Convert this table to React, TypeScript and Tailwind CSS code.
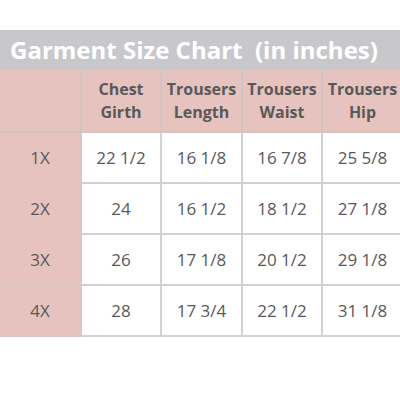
import React from "react";

const rows = [
  ["1X", "22 1/2", "16 1/8", "16 7/8", "25 5/8"],
  ["2X", "24", "16 1/2", "18 1/2", "27 1/8"],
  ["3X", "26", "17 1/8", "20 1/2", "29 1/8"],
  ["4X", "28", "17 3/4", "22 1/2", "31 1/8"],
];

const headers = [
  ["Chest", "Girth"],
  ["Trousers", "Length"],
  ["Trousers", "Waist"],
  ["Trousers", "Hip"],
];

export default function App() {
  return (
    <div
      className="w-[400px] h-[400px] overflow-hidden bg-white pt-[30px]"
      style={{ fontFamily: '"Open Sans", "Noto Sans", sans-serif' }}
    >
      <div className="h-[40px] bg-[#c8c8cc] flex items-center pl-[10px] text-white font-bold text-[24px] whitespace-pre leading-none">
        {"Garment Size Chart  (in inches)"}
      </div>
      <div className="grid grid-cols-[82px_80px_81px_80px_81px] w-[404px]">
        <div className="h-[63px] bg-[#e6c3bf] border-r-2 border-b-2 border-[#d3c4c2]" />
        {headers.map((h, i) => (
          <div
            key={i}
            className="h-[63px] bg-[#e6c3bf] border-r-2 border-b-2 border-[#d3c4c2] flex flex-col items-center justify-center text-[#595959] font-bold text-[16px] leading-[23px]"
          >
            <span>{h[0]}</span>
            <span>{h[1]}</span>
          </div>
        ))}
        {rows.map((r, ri) =>
          r.map((c, ci) => (
            <div
              key={ri + "-" + ci}
              className={
                "h-[51px] border-r-2 border-b-2 flex items-center justify-center text-[#595959] text-[17px] " +
                (ci === 0 ? "bg-[#e6c3bf] border-[#dcc6c3]" : "bg-white border-[#d2d2d2]")
              }
            >
              {c}
            </div>
          ))
        )}
      </div>
    </div>
  );
}
